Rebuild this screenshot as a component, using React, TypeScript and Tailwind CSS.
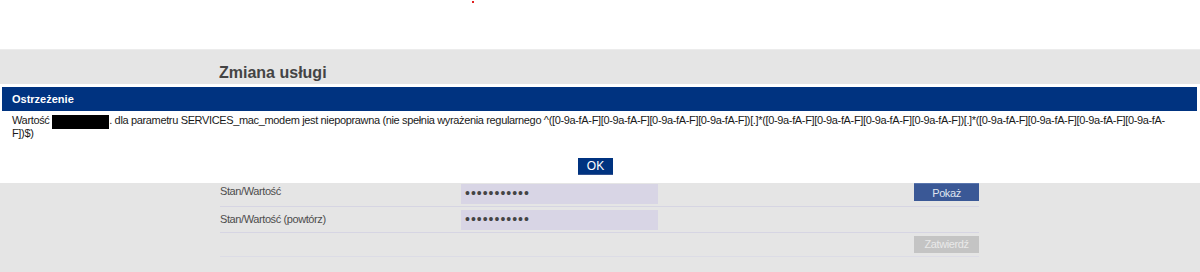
import React from 'react';

const regex =
  '^([0-9a-fA-F][0-9a-fA-F][0-9a-fA-F][0-9a-fA-F])[.]*([0-9a-fA-F][0-9a-fA-F][0-9a-fA-F][0-9a-fA-F])[.]*([0-9a-fA-F][0-9a-fA-F][0-9a-fA-F][0-9a-fA-';

const font = { fontFamily: '"Liberation Sans", Arial, sans-serif' };

const App: React.FC = () => {
  return (
    <div className="relative w-[1200px] h-[272px] overflow-hidden bg-white" style={font}>
      {/* top strip */}
      <div className="h-[49px] pl-[472px] pt-px">
        <span className="block w-[2px] h-[2px] bg-[#e02020]"></span>
      </div>

      {/* page body */}
      <div className="h-[223px] bg-[#e5e5e5] border-t border-[#ececec]">
        <div className="pl-[219px] pt-[14px]">
          <h1 className="text-[16px] leading-[18px] font-bold text-[#444]">Zmiana usługi</h1>
        </div>

        <div className="ml-[220px] w-[759px] mt-[99px] text-[11px] text-[#4d4d4d] tracking-[-0.4px]">
          <div className="h-[26px] flex items-center border-b border-[#d6d5e3]">
            <span className="w-[241px] -mt-[4px]">Stan/Wartość</span>
            <input
              type="password"
              readOnly
              defaultValue="abcdefghijk"
              className="w-[197px] h-[20px] bg-[#d8d5e5] pl-[4px] text-[14px] tracking-[1px] text-[#444] outline-none"
            />
            <button className="ml-auto w-[65px] h-[18px] bg-[#3a5896] border-t border-[#5a76ae] text-[#dfe4f0] text-[11px] leading-[16px] -mt-[3px]">
              Pokaż
            </button>
          </div>
          <div className="h-[26px] flex items-center border-b border-[#d6d5e3]">
            <span className="w-[241px] -mt-px">Stan/Wartość (powtórz)</span>
            <input
              type="password"
              readOnly
              defaultValue="abcdefghijk"
              className="w-[197px] h-[20px] bg-[#d8d5e5] pl-[4px] text-[14px] tracking-[1px] text-[#444] outline-none"
            />
          </div>
          <div className="h-[24px] flex items-center border-b border-[#dcdce6]">
            <button className="ml-auto w-[65px] h-[17px] bg-[#c4c4c4] text-[#e9e9e9] text-[11px] leading-[17px]">
              Zatwierdź
            </button>
          </div>
        </div>
      </div>

      {/* warning dialog */}
      <div className="absolute left-0 top-[84px] w-[1200px] h-[99px] bg-white pl-[2px] pr-[3px] pt-[3px]">
        <div className="h-[24px] bg-[#003380] pl-[10px] flex items-center">
          <span className="text-white text-[11px] font-bold">Ostrzeżenie</span>
        </div>
        <p className="pl-[10px] pt-[3px] text-[11px] leading-[12px] text-[#1a1a1a] tracking-[-0.35px]">
          <span className="whitespace-nowrap">
            Wartość{' '}
            <span className="inline-block w-[57px] h-[14px] -my-[2px] align-[-3px] bg-black"></span>. dla parametru
            SERVICES_mac_modem jest niepoprawna (nie spełnia wyrażenia regularnego {regex}
          </span>
          <br />
          F])$)
        </p>
        <div className="flex justify-center pr-[8px] mt-[19px]">
          <button className="w-[35px] h-[17px] bg-[#003380] border-b border-[#33528f] text-white text-[12px] leading-[16px]">
            OK
          </button>
        </div>
      </div>
    </div>
  );
};

export default App;
